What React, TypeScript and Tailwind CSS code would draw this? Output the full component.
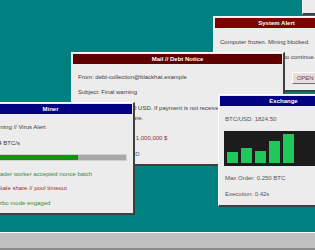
import React from "react";

const winCls =
  "absolute bg-[#ececec] border-t border-l border-white border-r-2 border-b-2 border-r-[#404040] border-b-[#404040] p-px flex flex-col overflow-hidden";

function TitleBar({ title, color }: { title: string; color: string }) {
  return (
    <div className={`h-[10px] shrink-0 flex items-center justify-center text-white font-bold ${color}`}>
      {title}
    </div>
  );
}

export default function App() {
  const bars = ["h-[11px]", "h-[15px]", "h-[12px]", "h-[22px]", "h-[29px]"];
  return (
    <div className="w-[315px] h-[250px] flex flex-col overflow-hidden font-['Liberation_Sans',Arial,sans-serif] text-[6px] leading-[10px] text-[#3c3c3c]">
      <div className="relative flex-1 bg-[#008080] overflow-hidden">
        {/* fragment top right */}
        <div className={`${winCls} left-[302px] top-[-50px] w-[40px] h-[65px]`} />

        {/* System Alert */}
        <div className={`${winCls} left-[213px] top-[16px] w-[128px] h-[76px]`}>
          <TitleBar title="System Alert" color="bg-[#800000]" />
          <div className="px-[5px] pt-[9px] whitespace-nowrap">
            <div>Computer frozen. Mining blocked.</div>
            <div className="mt-[5px]">Send 0.05 BTC ransom to continue.</div>
            <div className="mt-[10px] flex justify-end">
              <div className="h-[12px] px-[4px] flex items-center bg-[#e6dede] border-t border-l border-white border-r border-b border-r-[#707070] border-b-[#707070] text-[#7a3030]">
                OPEN FILE
              </div>
            </div>
          </div>
        </div>

        {/* Mail */}
        <div className={`${winCls} left-[71px] top-[52px] w-[214px] h-[114px]`}>
          <TitleBar title="Mail // Debt Notice" color="bg-[#5e0000]" />
          <div className="px-[5px] pt-[8px] whitespace-nowrap">
            <div>From: debt-collection@blackhat.example</div>
            <div className="mt-[5px]">Subject: Final warning</div>
            <div className="mt-[6px]">
              <div>Balance due: 150,000 USD. If payment is not received by midnight,</div>
              <div>Wallet frozen. Be aware.</div>
            </div>
            <div className="mt-[10px] text-[#8a3030]">Late penalty amount: 1,000,000 $</div>
            <div className="mt-[6px] text-[#5050a8]">Accepted: BTC or USD</div>
          </div>
        </div>

        {/* Miner */}
        <div className={`${winCls} left-[-33px] top-[102px] w-[168px] h-[113px]`}>
          <TitleBar title="Miner" color="bg-[#000080]" />
          <div className="px-[5px] pt-[8px] whitespace-nowrap">
            <div>Alert: Warning // Virus Alert</div>
            <div className="mt-[6px]">Rate: 0.04 BTC/s</div>
            <div className="mt-[6px] h-[7px] bg-[#a8a8a8] border border-[#d0d0d0] flex">
              <div className="w-[68%] bg-[#0a960a]" />
            </div>
            <div className="mt-[8px] text-[#3a8a3a]">[INFO] Loader worker accepted nonce batch</div>
            <div className="mt-[4px] text-[#a03030]">[WARN] Stale share // pool timeout</div>
            <div className="mt-[5px] text-[#3a8a3a]">[INFO] Turbo mode engaged</div>
          </div>
        </div>

        {/* Exchange */}
        <div className={`${winCls} left-[218px] top-[94px] w-[132px] h-[113px]`}>
          <TitleBar title="Exchange" color="bg-[#000080]" />
          <div className="px-[5px] pt-[8px] whitespace-nowrap text-[#555]">
            <div>BTC/USD: 1824.50</div>
            <div className="mt-[7px] -ml-px h-[35px] bg-[#1c1c1c] flex items-end gap-[3px] pl-[3px] pb-[3px]">
              {bars.map((h, i) => (
                <div key={i} className={`w-[11px] bg-[#1ec85a] ${h}`} />
              ))}
            </div>
            <div className="mt-[7px]">Max Order: 0.250 BTC</div>
            <div className="mt-[6px]">Execution: 0.42s</div>
          </div>
        </div>
      </div>
      <div className="h-[18px] shrink-0 bg-[#c0c0c0] border-t border-white border-b-2 border-b-[#8a8a8a]" />
    </div>
  );
}
